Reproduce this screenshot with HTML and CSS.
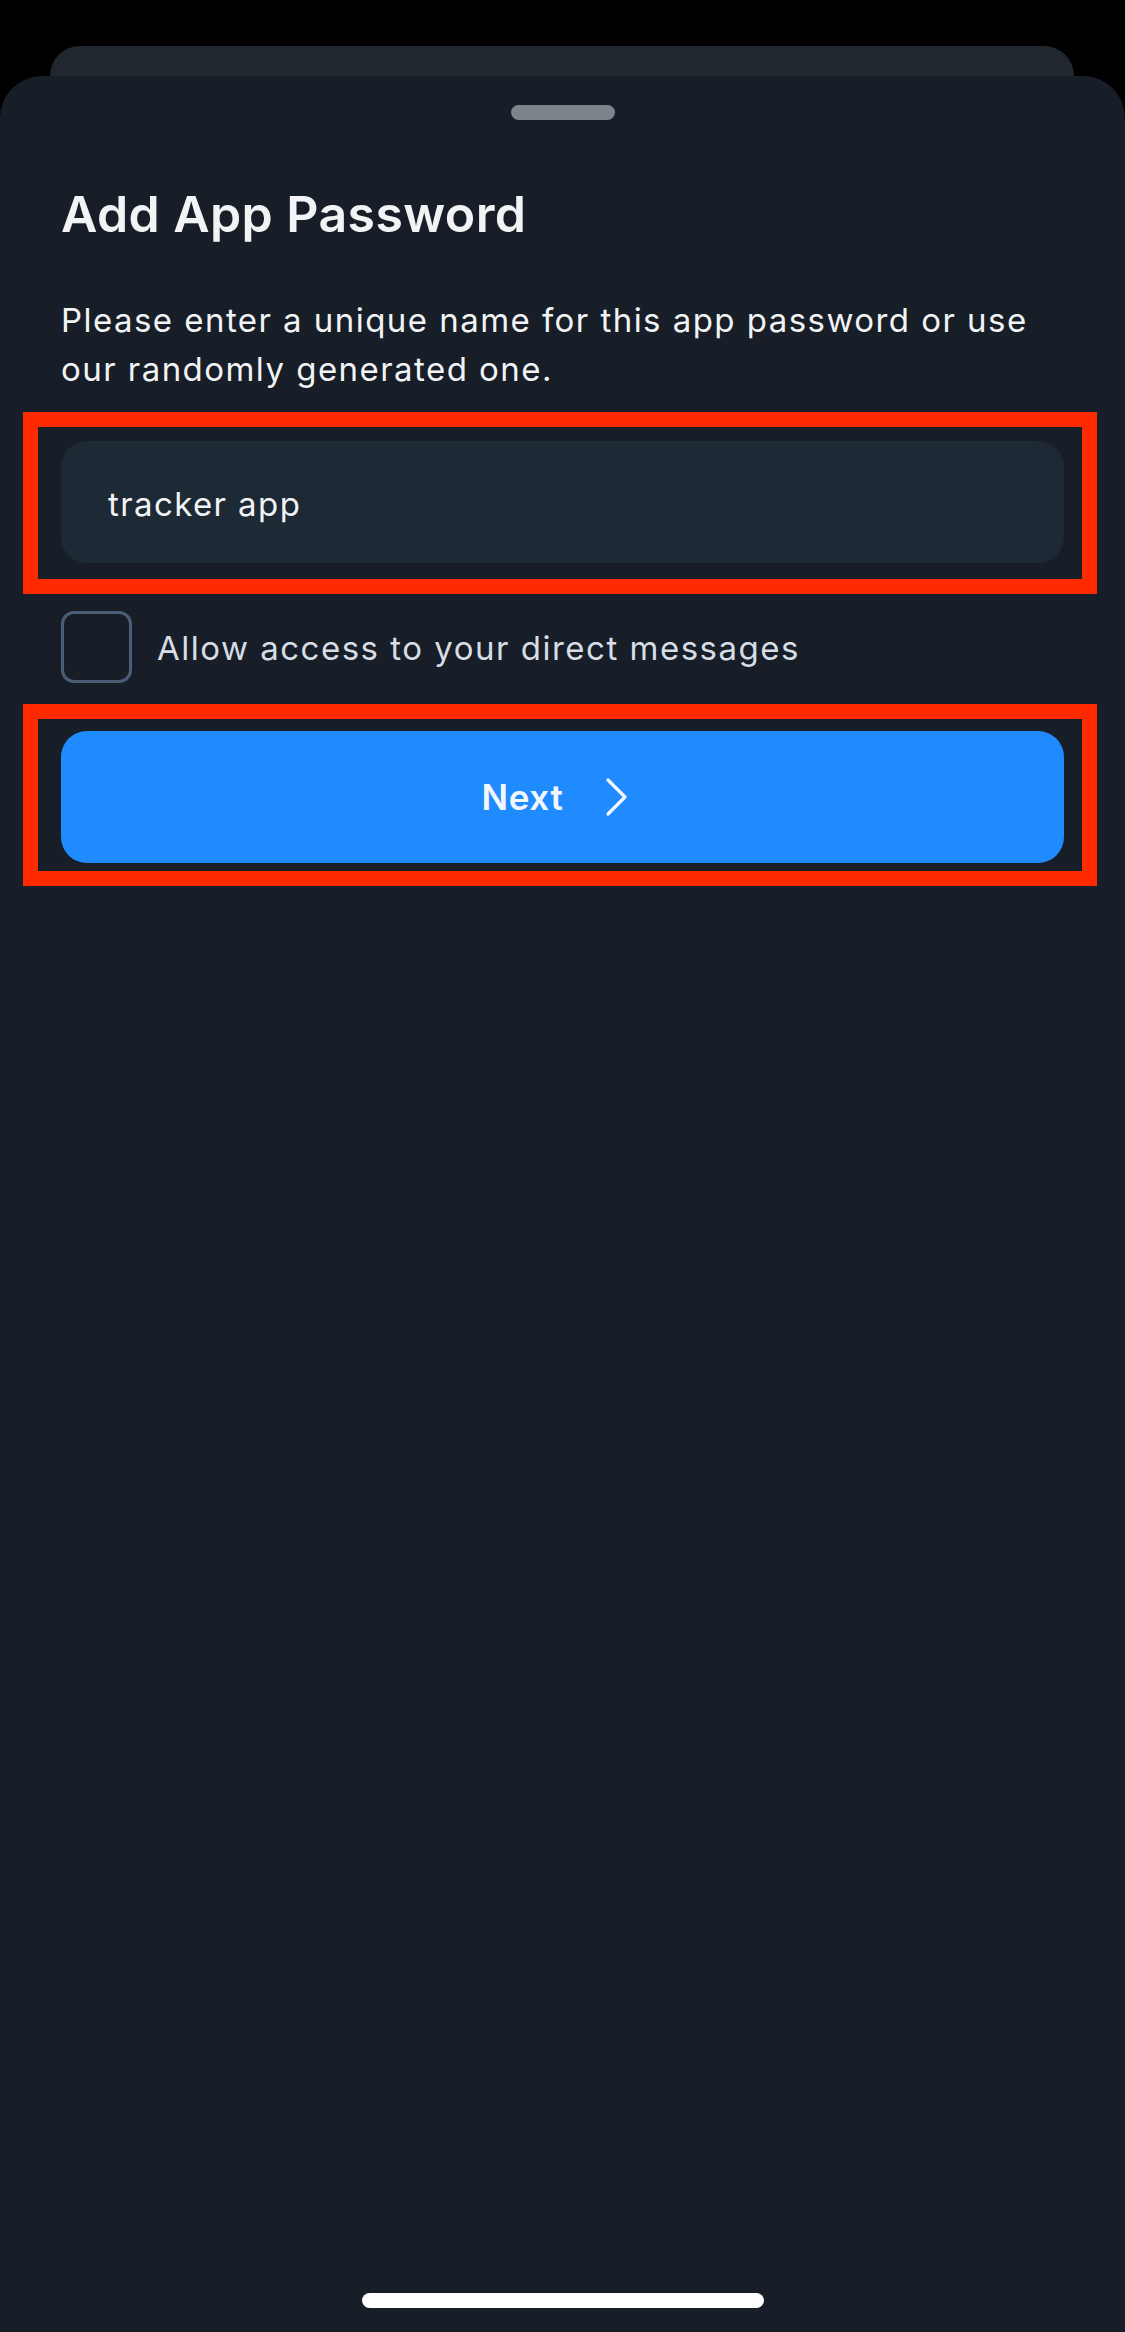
FILE: index.html
```html
<!DOCTYPE html>
<html lang="en">
<head>
<meta charset="utf-8">
<title>Add App Password</title>
<link rel="stylesheet" href="styles.css">
</head>
<body>
<div class="screen">
  <div class="back-card"></div>
  <div class="sheet">
    <div class="handle"></div>
    <div class="content">
      <h1 class="title">Add App Password</h1>
      <p class="desc">Please enter a unique name for this app password or use our randomly generated one.</p>
      <div class="highlight hl-input">
        <div class="field">tracker app</div>
      </div>
      <label class="check-row">
        <span class="checkbox"></span>
        <span class="check-label">Allow access to your direct messages</span>
      </label>
      <div class="highlight hl-button">
        <button class="next-btn">
          <span>Next</span>
          <svg class="chev" width="24" height="40" viewBox="0 0 24 40"><polyline points="3,3 20,20 3,37" fill="none" stroke="#f3f6fb" stroke-width="3.2" stroke-linecap="round" stroke-linejoin="round"/></svg>
        </button>
      </div>
    </div>
    <div class="home-indicator"></div>
  </div>
</div>
</body>
</html>
```
FILE: styles.css
```css
* { box-sizing: border-box; }
html, body { margin: 0; padding: 0; }
body {
  background: #000;
  font-family: Inter, "Noto Sans", "Liberation Sans", sans-serif;
  width: 1125px;
  height: 2332px;
  overflow: hidden;
}
.screen {
  padding-top: 46px;
  height: 2332px;
  display: flex;
  flex-direction: column;
}
.back-card {
  height: 30px;
  margin: 0 51px 0 50px;
  background: #20272f;
  border-radius: 30px 30px 0 0;
}
.sheet {
  flex: 1;
  background: #171e27;
  border-radius: 42px 42px 0 0;
  display: flex;
  flex-direction: column;
  align-items: stretch;
}
.handle {
  width: 104px;
  height: 15px;
  border-radius: 8px;
  background: #7e848b;
  margin: 29px auto 0;
}
.content {
  padding: 0 61px;
  display: flex;
  flex-direction: column;
}
.title {
  margin: 64px 0 0;
  font-size: 50px;
  line-height: 60px;
  font-weight: 600;
  color: #f1f3f5;
  letter-spacing: 0.4px;
}
.desc {
  margin: 52px 0 0;
  font-size: 33px;
  line-height: 49px;
  color: #f1f3f5;
  letter-spacing: 1.45px;
}
.highlight {
  border: 15px solid #ff2a00;
  margin-left: -38px;
  margin-right: -33px;
  padding-left: 23px;
  padding-right: 18px;
}
.hl-input {
  margin-top: 18px;
  padding-top: 14px;
  padding-bottom: 16px;
}
.field {
  height: 122px;
  background: #1e2936;
  border-radius: 26px;
  padding-left: 47px;
  display: flex;
  align-items: center;
  font-size: 33px;
  color: #f1f3f5;
  padding-top: 4px;
  letter-spacing: 1.4px;
}
.check-row {
  margin-top: 17px;
  display: flex;
  align-items: center;
  gap: 25px;
}
.checkbox {
  width: 71px;
  height: 72px;
  border: 3px solid #4a5e77;
  border-radius: 13px;
  flex-shrink: 0;
}
.check-label {
  font-size: 33px;
  color: #d6dde5;
  letter-spacing: 1.5px;
  padding-top: 2px;
}
.hl-button {
  margin-top: 21px;
  padding-top: 12px;
  padding-bottom: 8px;
}
.next-btn {
  width: 100%;
  height: 132px;
  border: 0;
  border-radius: 26px;
  background: #208bff;
  color: #f3f6fb;
  font-family: inherit;
  font-size: 35px;
  font-weight: 600;
  letter-spacing: 0.6px;
  display: flex;
  align-items: center;
  justify-content: center;
  gap: 42px;
  padding: 0 14px 0 0;
}
.chev { display: block; }
.home-indicator {
  margin: auto auto 24px;
  width: 402px;
  height: 15px;
  border-radius: 8px;
  background: #fff;
}
```
